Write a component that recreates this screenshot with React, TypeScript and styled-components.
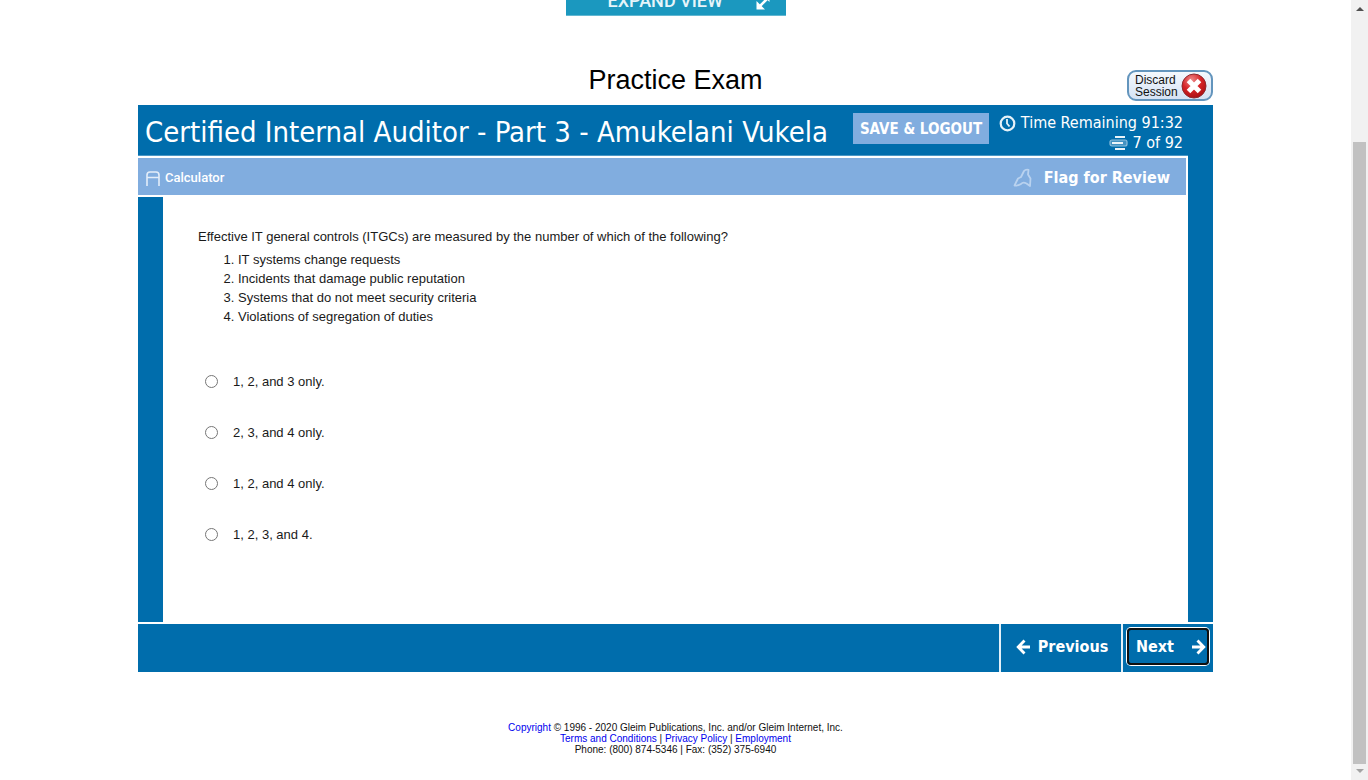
import React from "react";
import styled, { createGlobalStyle } from "styled-components";

const sans = '"Liberation Sans", Arial, sans-serif';
const humanist = '"DejaVu Sans Condensed", "Noto Sans", sans-serif';
const blue = "#006dac";
const pale = "#81addf";

const GlobalStyle = createGlobalStyle`
  *, *::before, *::after { box-sizing: border-box; }
  body { margin: 0; background: #fff; color: #000; font-family: ${sans}; }
  button { border: 0; padding: 0; margin: 0; background: none; color: inherit; cursor: pointer; }
  svg { flex: none; }
`;

const Shell = styled.div`
  display: flex;
  min-height: 100vh;
`;

const Page = styled.div`
  flex: 1;
  min-width: 0;
  display: flex;
  flex-direction: column;
  align-items: center;
`;

const ExpandStrip = styled.div`
  height: 16px;
  overflow: hidden;
  display: flex;
  align-items: flex-end;
`;

const ExpandButton = styled.button`
  width: 220px;
  height: 30px;
  flex: none;
  padding: 0 16px 0 42px;
  display: flex;
  align-items: center;
  justify-content: space-between;
  background: #1b98bf;
  border-bottom: 1px solid #62b7d1;
  color: #e6f5fa;
  font: 500 18px/20px Roboto, sans-serif;
`;

const Main = styled.main`
  width: 100%;
  max-width: 1075px;
`;

const TitleRow = styled.div`
  display: grid;
  grid-template-columns: 1fr auto 1fr;
  align-items: end;
  height: 89px;
  padding-bottom: 4px;
`;

const PageTitle = styled.h1`
  grid-column: 2;
  margin: 0;
  padding-bottom: 5px;
  font: 400 27px/32px ${sans};
`;

const DiscardButton = styled.button`
  justify-self: end;
  display: flex;
  align-items: center;
  justify-content: space-between;
  height: 31px;
  width: 86px;
  padding: 0 4px 0 6px;
  border: 2px solid #6395bd;
  border-radius: 9px;
  background: linear-gradient(#f4f8fd, #d5e2f4);
  color: #111;
  font: 400 12px/12px ${sans};
  text-align: left;
`;

const DiscardText = styled.span`
  width: 46px;
  flex: none;
`;

const Exam = styled.section`
  display: grid;
  grid-template-columns: minmax(0, 1fr) 25px;
`;

const RightRail = styled.div`
  grid-column: 2;
  grid-row: 1 / span 3;
  background: ${blue};
`;

const ExamHeader = styled.header`
  display: flex;
  align-items: flex-start;
  height: 51px;
  padding: 8px 5px 0 7px;
  background: ${blue};
  border-bottom: 1px solid #4a97c5;
  color: #fff;
  font-family: ${humanist};
`;

const ExamName = styled.h2`
  flex: 1;
  margin: 0;
  font-size: 29px;
  line-height: 38px;
  font-weight: 400;
  white-space: nowrap;
`;

const SaveButton = styled.button`
  width: 136px;
  height: 31px;
  margin-right: 11px;
  background: ${pale};
  color: #fff;
  font: 700 15px/20px ${humanist};
  white-space: nowrap;
`;

const Status = styled.div`
  display: flex;
  flex-direction: column;
  align-items: flex-end;
  width: 183px;
  font-size: 16px;
  line-height: 20px;
  white-space: nowrap;
`;

const StatusLine = styled.div`
  display: flex;
  align-items: center;
  gap: 5px;
`;

const ToolbarFrame = styled.div`
  padding: 2px 2px 2px 0;
  background: #fff;
`;

const Toolbar = styled.div`
  display: flex;
  align-items: center;
  justify-content: space-between;
  height: 37px;
  padding: 3px 16px 0 8px;
  background: ${pale};
  color: #fff;
`;

const ToolButton = styled.button<{ $large?: boolean }>`
  display: flex;
  align-items: center;
  gap: ${(p) => (p.$large ? 12 : 5)}px;
  font: ${(p) => (p.$large ? `700 16px/24px ${humanist}` : `500 13px/20px Roboto, sans-serif`)};
  white-space: nowrap;
`;

const Body = styled.div`
  min-height: 425px;
  padding: 30px 35px;
  border-left: 25px solid ${blue};
  background: #fff;
  color: #1a1a1a;
  font-size: 13px;
  line-height: 19px;
`;

const Question = styled.p`
  margin: 0 0 4px;
`;

const Factors = styled.ol`
  margin: 0;
  padding-left: 40px;
`;

const Choices = styled.fieldset`
  margin: 46px 0 0;
  padding: 0;
  border: 0;
`;

const Choice = styled.label`
  display: flex;
  align-items: center;
  height: 19px;
  margin-bottom: 32px;
`;

const Radio = styled.input`
  width: 13px;
  height: 13px;
  margin: 0 15px 0 7px;
`;

const FooterBar = styled.nav`
  grid-column: 1 / -1;
  display: flex;
  justify-content: flex-end;
  height: 48px;
  margin-top: 2px;
  background: ${blue};
  color: #fff;
`;

const FooterCell = styled.div<{ $width: number }>`
  width: ${(p) => p.$width}px;
  border-left: 2px solid #e3f0f8;
  padding: 4px;
`;

const NavButton = styled.button<{ $current?: boolean }>`
  display: flex;
  align-items: center;
  justify-content: ${(p) => (p.$current ? "space-between" : "center")};
  gap: 8px;
  width: 100%;
  height: 37px;
  padding: ${(p) => (p.$current ? "0 1px 0 7px" : "0 1px 0 3px")};
  font: 700 16px/24px ${humanist};
  border: 2px solid ${(p) => (p.$current ? "#101010" : "transparent")};
  border-radius: 4px;
  box-shadow: ${(p) => (p.$current ? "0 0 0 1px #fff" : "none")};
`;

const Legal = styled.footer`
  margin-top: 50px;
  color: #111;
  font-size: 10px;
  line-height: 11px;
  text-align: center;
`;

const LegalLink = styled.a`
  color: #0000ee;
  text-decoration: none;
`;

const ScrollTrack = styled.div`
  display: flex;
  flex-direction: column;
  align-items: center;
  width: 17px;
  padding: 7px 0;
  background: #f1f1f1;
`;

const ScrollThumb = styled.div`
  flex: 1;
  width: 13px;
  margin: 131px 0 5px;
  background: #c1c1c1;
`;

const ArrowIcon = ({ back = false }: { back?: boolean }) => (
  <svg width="14" height="16" viewBox="0 0 14 16" fill="none" stroke="#fff" strokeWidth="2.8">
    {back ? <path d="M14 8H3M8.5 1.5L2.2 8L8.5 14.5" /> : <path d="M0 8H11M5.5 1.5L11.8 8L5.5 14.5" />}
  </svg>
);

const ExpandIcon = () => (
  <svg width="14" height="20" viewBox="0 0 14 20" stroke="#fff" fill="#fff">
    <path d="M3.5 15.5L12 7" strokeWidth="2.6" />
    <path d="M0.5 10V18.5H9Z" stroke="none" />
    <path d="M13.5 11V3H5.5Z" stroke="none" />
  </svg>
);

const CloseIcon = () => (
  <svg width="26" height="26" viewBox="0 0 26 26">
    <defs>
      <radialGradient id="ball" cx="40%" cy="25%" r="80%">
        <stop offset="0" stopColor="#ee8a8a" />
        <stop offset="0.5" stopColor="#d62428" />
        <stop offset="1" stopColor="#a80d12" />
      </radialGradient>
    </defs>
    <circle cx="13" cy="13" r="12" fill="url(#ball)" stroke="#8e2a30" />
    <path d="M7.5 7.5L18.5 18.5M18.5 7.5L7.5 18.5" stroke="#fff" strokeWidth="5" />
  </svg>
);

const ClockIcon = () => (
  <svg width="17" height="17" viewBox="0 0 17 17" fill="none" stroke="#e5f1f8">
    <circle cx="8.5" cy="8.5" r="6.8" strokeWidth="2.2" />
    <path d="M8 4V8.5L10.5 11.5" strokeWidth="1.8" />
  </svg>
);

const StackIcon = () => (
  <svg width="19" height="14" viewBox="0 0 19 14" fill="none">
    <path d="M6 1H16M6 13H16" stroke="#e8f3f9" strokeWidth="1.8" />
    <rect x="1" y="4" width="17" height="6" rx="2" fill="#4292c2" stroke="#8dbfdc" strokeWidth="1.2" />
    <path d="M3 7H14" stroke="#fff" strokeWidth="1.8" />
  </svg>
);

const CalculatorIcon = () => (
  <svg width="14" height="15" viewBox="0 0 14 15" fill="none" stroke="#e3edf9" strokeWidth="1.6">
    <path d="M1 15V4Q1 1 4 1H10Q13 1 13 4V15M1 6.5H13" />
  </svg>
);

const FlagIcon = () => (
  <svg width="19" height="20" viewBox="0 0 19 20" fill="none" stroke="#b9d2ef" strokeWidth="1.8" strokeLinejoin="round">
    <path d="M1.5 17.5L5 10.5L8 9L11 3Q12.5 1.2 15.5 1.8L15 6.5L17.5 10.5L17 18L13.5 15.5Q10 13.5 8 16Q5 18 1.5 17.5Z" />
  </svg>
);

const factors = [
  "IT systems change requests",
  "Incidents that damage public reputation",
  "Systems that do not meet security criteria",
  "Violations of segregation of duties",
];

const choices = ["1, 2, and 3 only.", "2, 3, and 4 only.", "1, 2, and 4 only.", "1, 2, 3, and 4."];

export default function App() {
  return (
    <>
      <GlobalStyle />
      <Shell>
        <Page>
          <ExpandStrip>
            <ExpandButton type="button">
              EXPAND VIEW
              <ExpandIcon />
            </ExpandButton>
          </ExpandStrip>
          <Main>
            <TitleRow>
              <PageTitle>Practice Exam</PageTitle>
              <DiscardButton type="button">
                <DiscardText>Discard Session</DiscardText>
                <CloseIcon />
              </DiscardButton>
            </TitleRow>
            <Exam>
              <ExamHeader>
                <ExamName>Certified Internal Auditor - Part 3 - Amukelani Vukela</ExamName>
                <SaveButton type="button">SAVE &amp; LOGOUT</SaveButton>
                <Status>
                  <StatusLine>
                    <ClockIcon />
                    Time Remaining 91:32
                  </StatusLine>
                  <StatusLine>
                    <StackIcon />7 of 92
                  </StatusLine>
                </Status>
              </ExamHeader>
              <RightRail />
              <ToolbarFrame>
                <Toolbar>
                  <ToolButton type="button">
                    <CalculatorIcon />
                    Calculator
                  </ToolButton>
                  <ToolButton type="button" $large>
                    <FlagIcon />
                    Flag for Review
                  </ToolButton>
                </Toolbar>
              </ToolbarFrame>
              <Body>
                <Question>
                  Effective IT general controls (ITGCs) are measured by the number of which of the following?
                </Question>
                <Factors>
                  {factors.map((f) => (
                    <li key={f}>{f}</li>
                  ))}
                </Factors>
                <Choices aria-label="Answer choices">
                  {choices.map((c) => (
                    <Choice key={c}>
                      <Radio type="radio" name="answer" />
                      {c}
                    </Choice>
                  ))}
                </Choices>
              </Body>
              <FooterBar>
                <FooterCell $width={122}>
                  <NavButton type="button">
                    <ArrowIcon back />
                    Previous
                  </NavButton>
                </FooterCell>
                <FooterCell $width={92}>
                  <NavButton type="button" $current>
                    Next
                    <ArrowIcon />
                  </NavButton>
                </FooterCell>
              </FooterBar>
            </Exam>
          </Main>
          <Legal>
            <LegalLink href="#copyright">Copyright</LegalLink> © 1996 - 2020 Gleim Publications, Inc. and/or Gleim
            Internet, Inc.
            <br />
            <LegalLink href="#terms">Terms and Conditions</LegalLink> |{" "}
            <LegalLink href="#privacy">Privacy Policy</LegalLink> |{" "}
            <LegalLink href="#employment">Employment</LegalLink>
            <br />
            Phone: (800) 874-5346 | Fax: (352) 375-6940
          </Legal>
        </Page>
        <ScrollTrack aria-hidden="true">
          <svg width="8" height="4" viewBox="0 0 8 4">
            <path d="M0 4L4 0L8 4Z" fill="#505050" />
          </svg>
          <ScrollThumb />
          <svg width="8" height="4" viewBox="0 0 8 4">
            <path d="M0 0L4 4L8 0Z" fill="#a3a3a3" />
          </svg>
        </ScrollTrack>
      </Shell>
    </>
  );
}
